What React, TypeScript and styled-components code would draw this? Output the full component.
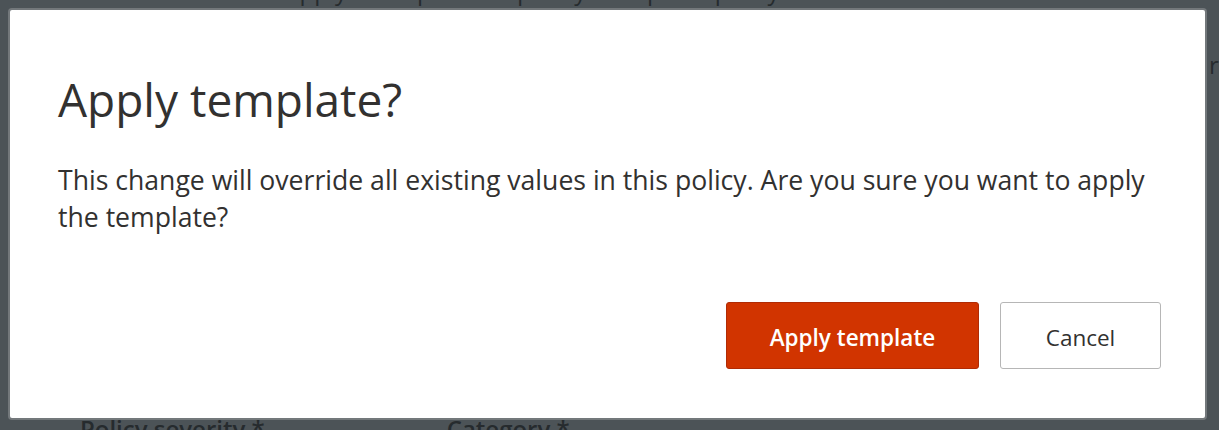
import React from "react";
import styled, { createGlobalStyle } from "styled-components";

const Global = createGlobalStyle`
  html, body { margin: 0; padding: 0; }
  body {
    width: 1219px;
    height: 430px;
    overflow: hidden;
    background: #4c5357;
    font-family: "Open Sans", "Noto Sans", sans-serif;
  }
`;

const Page = styled.div`
  position: relative;
  width: 1219px;
  height: 430px;
  overflow: hidden;
`;

const BackLine = styled.div`
  color: #262b2e;
  font-size: 24px;
  line-height: 30px;
  white-space: nowrap;
`;

const BackTop = styled(BackLine)`
  margin-top: -24px;
  padding-left: 205px;
`;

const BackFields = styled.div`
  position: absolute;
  left: 80px;
  top: 414px;
  display: flex;
  gap: 182px;
`;

const BackLabel = styled(BackLine)`
  font-weight: 600;
`;

const BackRight = styled(BackLine)`
  position: absolute;
  left: 1209px;
  top: 50px;
`;

const Overlay = styled.div`
  position: absolute;
  inset: 0;
  display: flex;
  align-items: flex-start;
  justify-content: flex-start;
  padding: 10px 0 0 10px;
`;

const Dialog = styled.div`
  box-sizing: border-box;
  width: 1195px;
  height: 408px;
  background: #ffffff;
  border-radius: 2px;
  box-shadow: 0 0 0 2px rgba(120, 124, 127, 0.9);
  padding: 59px 44px 49px 48px;
  display: flex;
  flex-direction: column;
`;

const Title = styled.h1`
  margin: 0;
  font-size: 46px;
  line-height: 60px;
  font-weight: 400;
  color: #323130;
`;

const Body = styled.p`
  margin: 33px 0 0 0;
  font-size: 26.6px;
  line-height: 37px;
  font-weight: 400;
  color: #323130;
  max-width: 1110px;
`;

const Actions = styled.div`
  margin-top: auto;
  display: flex;
  justify-content: flex-end;
  gap: 21px;
`;

const Button = styled.button<{ $primary?: boolean }>`
  box-sizing: border-box;
  height: 67px;
  padding: 3px 0 0 0;
  border-radius: 3px;
  font-family: inherit;
  font-size: 22.5px;
  font-weight: ${(p) => (p.$primary ? 600 : 400)};
  cursor: pointer;
  background: ${(p) => (p.$primary ? "#d13400" : "#ffffff")};
  color: ${(p) => (p.$primary ? "#ffffff" : "#323130")};
  border: 1.5px solid ${(p) => (p.$primary ? "#b02b05" : "#b6b6b6")};
  width: ${(p) => (p.$primary ? "253px" : "161px")};
`;

export default function App() {
  return (
    <Page>
      <Global />
      <BackTop>ou can apply a template to quickly set up this policy.</BackTop>
      <BackRight>r</BackRight>
      <BackFields>
        <BackLabel>Policy severity *</BackLabel>
        <BackLabel>Category *</BackLabel>
      </BackFields>
      <Overlay>
        <Dialog role="dialog" aria-labelledby="dlg-title">
          <Title id="dlg-title">Apply template?</Title>
          <Body>
            This change will override all existing values in this policy. Are you sure you want to apply
            the template?
          </Body>
          <Actions>
            <Button $primary>Apply template</Button>
            <Button>Cancel</Button>
          </Actions>
        </Dialog>
      </Overlay>
    </Page>
  );
}
